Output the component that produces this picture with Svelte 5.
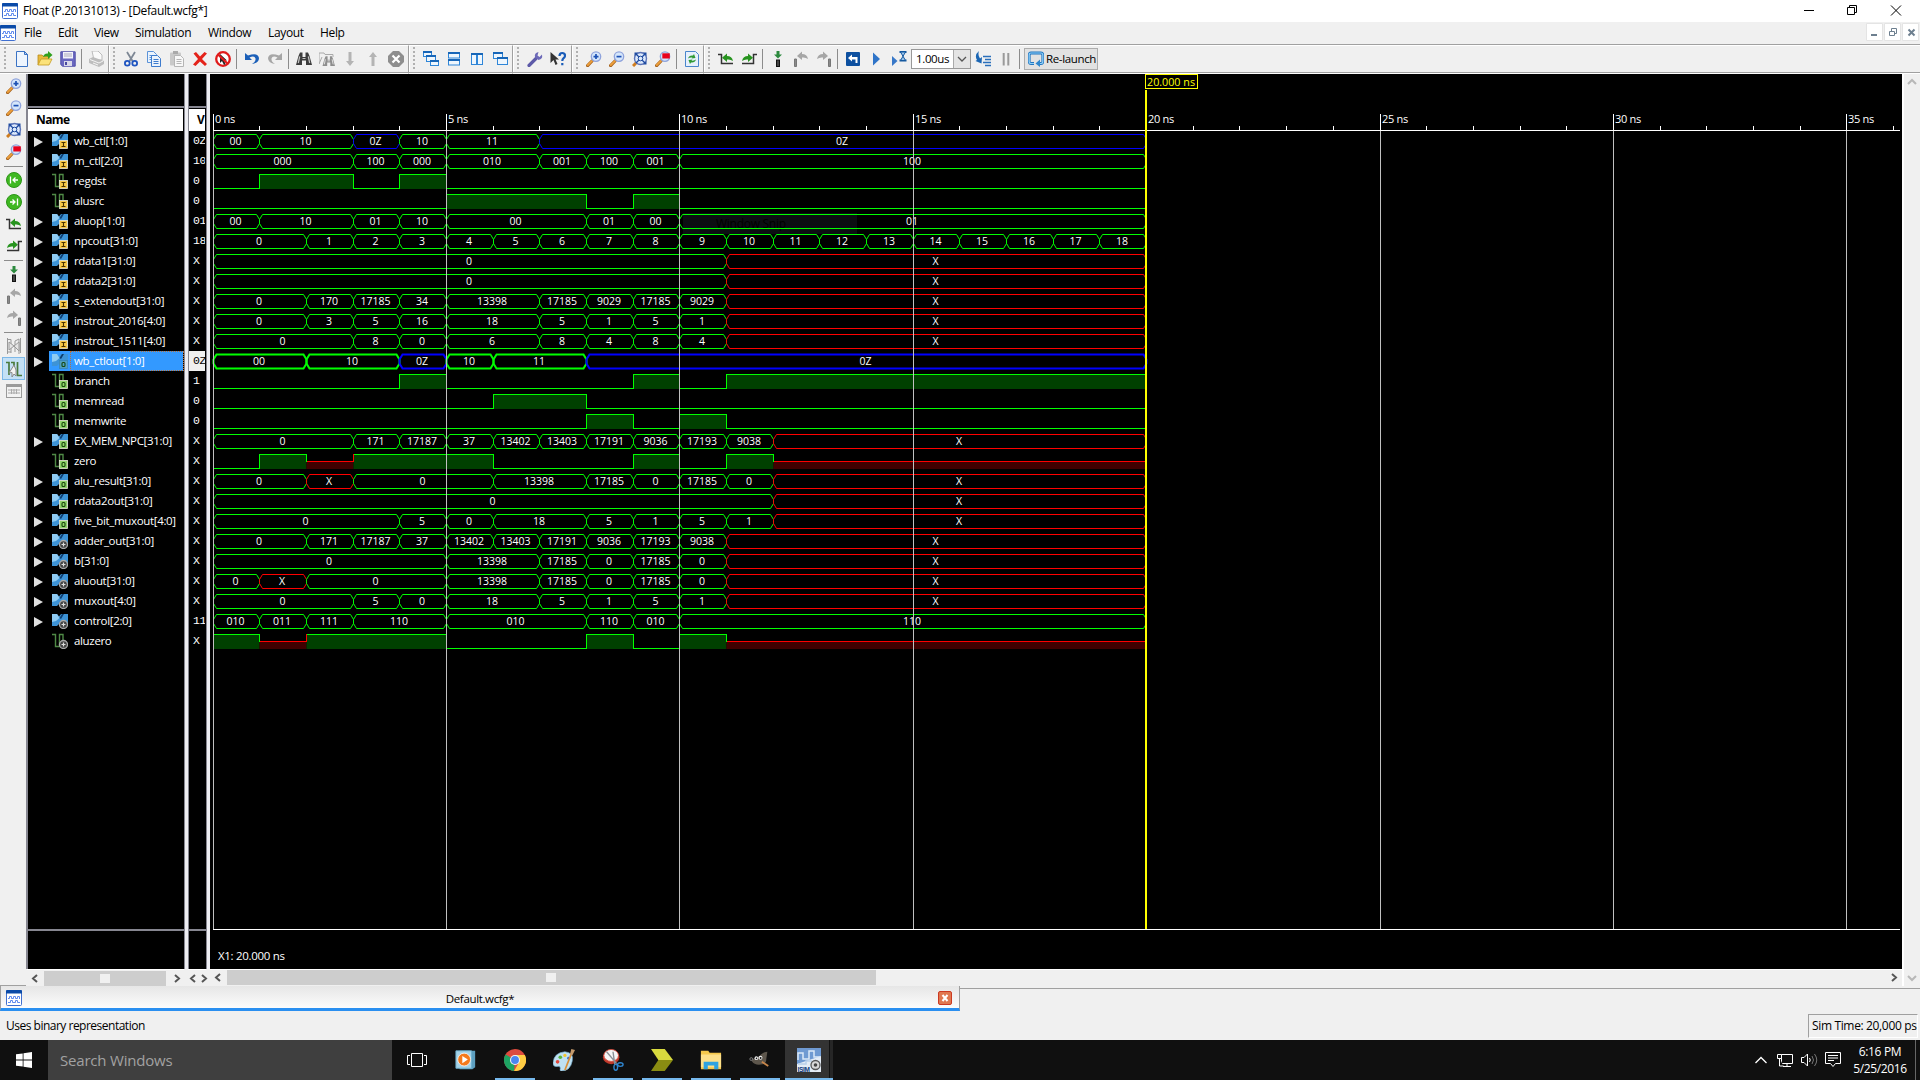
<script>
  // Time axis: origin and scale of the waveform viewport
  const X0 = 213;
  const NS = 46.68;
  const END = 20;
  const at = (t) => Math.floor(X0 + t * NS) + 0.5;

  const signals = [
    ['wb_ctl[1:0]', 'I', '0Z', '0:00 1:10 3:0Z 4:10 5:11 7:0Z'],
    ['m_ctl[2:0]', 'I', '10', '0:000 3:100 4:000 5:010 7:001 8:100 9:001 10:100'],
    ['regdst', 'I', '0', '0:0 1:1 3:0 4:1 5:0'],
    ['alusrc', 'I', '0', '0:0 5:1 8:0 9:1 10:0'],
    ['aluop[1:0]', 'I', '01', '0:00 1:10 3:01 4:10 5:00 8:01 9:00 10:01'],
    ['npcout[31:0]', 'I', '18', '0:0 2:1 3:2 4:3 5:4 6:5 7:6 8:7 9:8 10:9 11:10 12:11 13:12 14:13 15:14 16:15 17:16 18:17 19:18'],
    ['rdata1[31:0]', 'I', 'X', '0:0 11:X'],
    ['rdata2[31:0]', 'I', 'X', '0:0 11:X'],
    ['s_extendout[31:0]', 'I', 'X', '0:0 2:170 3:17185 4:34 5:13398 7:17185 8:9029 9:17185 10:9029 11:X'],
    ['instrout_2016[4:0]', 'I', 'X', '0:0 2:3 3:5 4:16 5:18 7:5 8:1 9:5 10:1 11:X'],
    ['instrout_1511[4:0]', 'I', 'X', '0:0 3:8 4:0 5:6 7:8 8:4 9:8 10:4 11:X'],
    ['wb_ctlout[1:0]', 'O', '0Z', '0:00 2:10 4:0Z 5:10 6:11 8:0Z'],
    ['branch', 'O', '1', '0:0 4:1 5:0 9:1 10:0 11:1'],
    ['memread', 'O', '0', '0:0 6:1 8:0'],
    ['memwrite', 'O', '0', '0:0 8:1 9:0 10:1 11:0'],
    ['EX_MEM_NPC[31:0]', 'O', 'X', '0:0 3:171 4:17187 5:37 6:13402 7:13403 8:17191 9:9036 10:17193 11:9038 12:X'],
    ['zero', 'O', 'X', '0:0 1:1 2:X 3:1 6:0 9:1 10:0 11:1 12:X'],
    ['alu_result[31:0]', 'O', 'X', '0:0 2:X 3:0 6:13398 8:17185 9:0 10:17185 11:0 12:X'],
    ['rdata2out[31:0]', 'O', 'X', '0:0 12:X'],
    ['five_bit_muxout[4:0]', 'O', 'X', '0:0 4:5 5:0 6:18 8:5 9:1 10:5 11:1 12:X'],
    ['adder_out[31:0]', 'W', 'X', '0:0 2:171 3:17187 4:37 5:13402 6:13403 7:17191 8:9036 9:17193 10:9038 11:X'],
    ['b[31:0]', 'W', 'X', '0:0 5:13398 7:17185 8:0 9:17185 10:0 11:X'],
    ['aluout[31:0]', 'W', 'X', '0:0 1:X 2:0 5:13398 7:17185 8:0 9:17185 10:0 11:X'],
    ['muxout[4:0]', 'W', 'X', '0:0 3:5 4:0 5:18 7:5 8:1 9:5 10:1 11:X'],
    ['control[2:0]', 'W', '11', '0:010 1:011 2:111 3:110 5:010 8:110 9:010 10:110'],
    ['aluzero', 'W', 'X', '0:1 1:X 2:1 5:0 8:1 9:0 10:1 11:X']
  ].map(([name, kind, value, wave], row) => {
    const steps = wave.split(' ').map((s) => s.split(':'));
    const segs = steps.map(([t, v], i) => ({ t: +t, e: i + 1 < steps.length ? +steps[i + 1][0] : END, v }));
    return { name, kind, value, segs, bus: name.includes('['), y: 134.5 + row * 20, selected: name === 'wb_ctlout[1:0]' };
  });

  const busColor = (v) => (v === 'X' ? '#f00' : v.includes('Z') ? '#00f' : '#0f0');
  const bitColor = (v) => (v === 'X' ? '#f00' : '#0f0');
  const level = (v) => (v === '1' ? 0 : v === 'X' ? 7 : 14);

  const hexagon = (s, y) => {
    const a = at(s.t), b = at(s.e);
    return `M${a} ${y + 7}V${y + 5}L${a + 3} ${y}H${b - 3}L${b} ${y + 5}V${y + 9}L${b - 3} ${y + 14}H${a + 3}L${a} ${y + 9}Z`;
  };

  const ticks = Array.from({ length: 37 }, (_, i) => i);
  const majors = ticks.filter((t) => t % 5 === 0);

  const lens = '<path d="M1.6 14.6 6 10" stroke="#a8641e" stroke-width="3.2" stroke-linecap="round"/><path d="M1.8 14 6 9.8" stroke="#eda03c" stroke-width="1.8" stroke-linecap="round"/><circle cx="10" cy="5.6" r="4.7" fill="#d5e6fb" stroke="#8fa3dc" stroke-width="1.3"/>';
  const app = '<rect x=".5" y=".5" width="15" height="15" rx="1" fill="#fff" stroke="#3f6fd0"/><path d="M0 1q0-1 1-1h14q1 0 1 1v2.5H0z" fill="#0a4aa8"/><path d="M2 8.500h1.500v-2h2v2h2v-2h2v2h2v-2h2V9M2 12.500h2.500v-2h2v2h3v-2h2v2H14" fill="none" stroke="#5f8aee"/>';
  const stepL = (c, k) => `<path d="M0 3.500h3.500V12.500H15" fill="none" stroke="${k}" stroke-width="1.5"/><path d="M4 6.800 9 2.500V5q5 0 6 5-2.500-2-6-1.500V11z" fill="${c}"/>`;
  const stepR = (c, k) => `<path d="M16 3.500h-3.500V12.500H1" fill="none" stroke="${k}" stroke-width="1.5"/><path d="M12 6.800 7 2.500V5Q2 5 1 10q2.500-2 6-1.500V11z" fill="${c}"/>`;
  const doc = (x, y, f, s) => `<path d="M${x} ${y}h6l3 3v8h-9z" fill="${f}" stroke="${s}"/><path d="M${x + 2} ${y + 4}h5m-5 2h5m-5 2h5" stroke="${s}" fill="none"/>`;
  const win = (x, y, w, h) => `<rect x="${x}" y="${y}" width="${w}" height="${h}" fill="#eef6fd" stroke="#2f86d8"/><path d="M${x - 0.5} ${y + 0.5}h${w + 1}" stroke="#1766b8" stroke-width="2"/>`;
  const binos = (c, d) => `<path d="M0 14 2.500 5 4 1.500h2.500V6h3V1.500H12L13.500 5 16 14h-6V9.500H6V14z" fill="${c}"/><path d="M3.700 5.500 2.300 12M12.300 5.500l1.400 6.500M6.500 7.500h3" stroke="${d}" stroke-width="1.200"/>`;

  const icons = {
    app,
    new: '<path d="M2.500.5h8l3 3v12h-11z" fill="#eef5fe" stroke="#3a72c4"/><path d="M10.500.5v3h3z" fill="#bcd4f4" stroke="#3a72c4"/>',
    open: '<path d="M1 14V4h4l1.500 1.500H12V8" fill="#e8b93c" stroke="#b98a1a" stroke-width=".8"/><path d="M1 14 4 8h11l-3 6z" fill="#fbe27a" stroke="#c49a22" stroke-width=".8"/><path d="M6 6Q7 2 11 2.500V0l4.500 4-4.500 4V5.500Q8 5 6 6z" fill="#2fa01c"/>',
    save: '<path d="M.8.8h14.400v14.400H2.500L.8 13.500z" fill="#6a68c0" stroke="#504fa8"/><rect x="3" y="1" width="10" height="6.500" fill="#f2f2fb"/><path d="M4 3h8M4 5h8" stroke="#aab"/><rect x="4" y="10" width="8" height="5" fill="#d9d9ea"/><rect x="5" y="11" width="2" height="3" fill="#4a4aa0"/>',
    print: '<path d="M3 0h6l4 4v5H5z" fill="#fafafa" stroke="#bbb"/><path d="m0 8 4-2 11 4v3l-5 3L0 12z" fill="#bdbdbd"/><path d="m1 8.500 9 3.500 4-2M4 12l5 2" stroke="#f4f4f4" fill="none"/>',
    cut: '<path d="M4 1 9.500 10M12 1 6.500 10" stroke="#7d8794" stroke-width="1.800"/><circle cx="4.300" cy="12.300" r="2.400" fill="none" stroke="#1f55c0" stroke-width="1.800"/><circle cx="11.700" cy="12.300" r="2.400" fill="none" stroke="#1f55c0" stroke-width="1.800"/>',
    copy: doc(1.5, 0.5, '#eaf3fd', '#5b93d8') + doc(5.5, 4.5, '#eaf3fd', '#3d7bcd'),
    paste: '<rect x="1" y="1.500" width="11" height="13" rx="1" fill="#c9c9c9"/><path d="M4 0h5v3H4z" fill="#aaa"/>' + doc(5.5, 4.5, '#f8f8f8', '#b5b5b5'),
    del: '<path d="M1.500 2.500 4 1l4 4.500L12.500 1 15 2.500 10 8l5 5-2 2-5-4.500L3.500 15 1 13.500 6 8z" fill="#e4231a"/>',
    stop: '<circle cx="8" cy="8" r="6.800" fill="#fff" stroke="#e01b1b" stroke-width="2.300"/><path d="M5 3v9l2-2 2 4 1.500-1L9 9.500h3z" fill="#222"/><path d="m3 3.500 10 9.500" stroke="#e01b1b" stroke-width="2.200"/>',
    undo: '<path d="M1 2v7h7L5.500 6.500q5-2.500 6 1 .5 3-3.500 5.500 7-1 7-6Q14 1 4 4.500z" fill="#1b5fb8"/>',
    redo: '<path d="M15 2v7H8l2.500-2.500q-5-2.500-6 1Q4 10.500 8 13 1 12 1 7q1-6 11-2.500z" fill="#a6a6a6"/>',
    find: binos('#3c3c3c', '#c4c4c4'),
    findf: '<path d="M0 13V2h5l1 1.500h8V6M0 13l3-7" fill="none" stroke="#aaa"/><g transform="translate(3.500 4) scale(.78)">' + binos('#8e8e8e', '#e4e4e4') + '</g>',
    down: '<path d="M6.500 1h3v9H12l-4 5-4-5h2.500z" fill="#b4b4b4"/>',
    up: '<path d="M6.500 15h3V6H12L8 1 4 6h2.500z" fill="#b4b4b4"/>',
    cancel: '<path d="M5 0h6l5 5v6l-5 5H5l-5-5V5z" fill="#8e8e8e"/><path d="m4.500 4.500 7 7m0-7-7 7" stroke="#fff" stroke-width="2.200"/>',
    cascade: win(0.5, 0.5, 8, 5) + win(3.5, 4.5, 9, 6) + win(7.5, 9.5, 8, 5),
    tileh: win(2.5, 1.5, 11, 5.5) + win(2.5, 8.5, 11, 5.5),
    tilev: win(2.5, 2.5, 5, 11) + win(8.5, 2.5, 5, 11),
    windows: win(1.5, 1.5, 9, 6) + win(5.5, 6.5, 10, 7),
    wrench: '<path d="M2 14.500 9 7.500" stroke="#5d5aa8" stroke-width="3.200" stroke-linecap="round"/><path d="M8 6Q7 2 11.500 1L10.500 4.500 12.500 6 15 3.500Q16 8 11.500 9z" fill="#6c69b8"/>',
    whats: '<path d="M.5 1v11l3-3 2 5 2-1-2-4.500h3.500z" fill="#333"/><path d="M9.500 5Q9.500 2 12.300 2q2.700 0 2.700 2.700 0 1.600-1.600 2.600-1.100.8-1.100 2.700M12.300 12v2.300" stroke="#1a5cb8" stroke-width="2.200"/>',
    zin: lens + '<path d="M7.500 5.600h5M10 3.100v5" stroke="#1c50b4" stroke-width="1.700"/>',
    zout: lens + '<path d="M7.500 5.600h5" stroke="#1c50b4" stroke-width="1.700"/>',
    zfit: '<path d="M1 15 4.500 11.500" stroke="#cf7d20" stroke-width="3"/><circle cx="8.500" cy="7.500" r="6" fill="#dce9fb" stroke="#5b74b8" stroke-width="1.400"/><path d="m4 3 9 9m0-9-9 9" stroke="#1d4aa0" stroke-width="1.300"/><path d="M2.500 1.500H6L2.500 5zM14.500 1.500V5L11 1.500zM14.500 13.500H11l3.500-3.500z" fill="#1d4aa0"/><circle cx="8.500" cy="7.500" r="2.300" fill="#dce9fb" stroke="#1d4aa0"/>',
    zred: lens + '<rect x="7.300" y="2.300" width="7.500" height="5.200" fill="#e8001c"/>',
    refresh: '<path d="M1.500.5h10l3 3v12h-13z" fill="#e6f0fc" stroke="#4a86cc"/><path d="M4 7.500Q5 4 9 4.500L10 3l1.500 4-4 .5 1-1Q6 6 4 7.500zM12 8.500q-1 3.500-5 3l-1 1.500-1.500-4 4-.5-1 1q2.500.5 4.500-1z" fill="#2f9a34"/>',
    prev: stepL('#27941f', '#333'),
    next: stepR('#27941f', '#333'),
    marker: '<path d="M6.500 0h3v3.500H12L8 7.500 4 3.500h2.500z" fill="#2c8a3e"/><rect x="6.500" y="9" width="3" height="6.500" fill="#444" stroke="#111"/>',
    mprev: '<path d="M1.500 8h2v7.500h-2z" fill="#8a8a8a" stroke="#777"/><path d="M4 5 9 .5V3q5 0 6 5-2.500-2-6-1.500V9z" fill="#a6a6a6"/>',
    mnext: '<path d="M12.500 8h2v7.500h-2z" fill="#8a8a8a" stroke="#777"/><path d="M12 5 7 .5V3Q2 3 1 8q2.500-2 6-1.500V9z" fill="#a6a6a6"/>',
    restart: '<rect x="1" y="1" width="14" height="14" rx="1" fill="#0d50a0"/><path d="m3 7 4-3.500V6h5.500v6h-2V8.500H7v2z" fill="#fff"/>',
    play: '<path d="M5 1.500 12 8l-7 6.500z" fill="#2f74c8"/>',
    playt: '<path d="M1 5v10l5.500-5z" fill="#3878c8"/><path d="M8.500 1h7M8.500 9.500h7" stroke="#15599f" stroke-width="1.800"/><path d="m9.500 1 5 8.500h-5l5-8.500z" fill="#9cc4ea" stroke="#15599f"/>',
    step: '<path d="M4 0Q-1 4 2 9l-1.500 1L6.500 12.500 7 6 5 7.500Q2.500 4 4 0z" fill="#1b66b4"/><path d="M8 5.500h8M10 8.500h6M8 11.500h8M10 14.500h6" stroke="#2b6fbb" stroke-width="1.400"/>',
    pause: '<path d="M5.700 2v12.500M10.300 2v12.500" stroke="#9a9a9a" stroke-width="2"/>',
    relaunch: '<path d="M6 12.500H3Q1.200 12.500 1.200 10.500V4Q1.200 2 3 2h10q1.800 0 1.800 2v6.500q0 2-1.800 2h-1" fill="none" stroke="#1f74c0" stroke-width="2.800"/><path d="M6 12.500H3Q1.200 12.500 1.200 10.500V4Q1.200 2 3 2h10q1.800 0 1.800 2v6.500q0 2-1.800 2h-1" fill="none" stroke="#8fd0f8" stroke-width="1.200"/><path d="M7.500 12.500 12 8.500v7.500z" fill="#2f86cc"/>',
    gprev: '<circle cx="8" cy="8" r="7.500" fill="#3fb822" stroke="#2c9418"/><path d="M4.500 4.500v7M12 8H7m2.500-2.500L7 8l2.500 2.500" fill="none" stroke="#fff" stroke-width="1.300"/>',
    gnext: '<circle cx="8" cy="8" r="7.500" fill="#3fb822" stroke="#2c9418"/><path d="M11.500 4.500v7M4 8h5M6.500 5.500 9 8l-2.500 2.500" fill="none" stroke="#fff" stroke-width="1.300"/>',
    snapoff: '<path d="M1.500 0v16M1 1.500h4V15M9 14V3l4-2v15M14.500 0v15M1 14h4" fill="none" stroke="#999"/><path d="M3 4 8 8 3 12zM13 4 8 8l5 5z" fill="#e4e4e4" stroke="#999"/>',
    snap: '<path d="M0 1.500h3V14M5 1.500h3V7M11.500 1v13.500H16" fill="none" stroke="#4a7a3c" stroke-width="1.700"/><path d="M8 4 3 12l3-.5V16l2-3 2 2V9z" fill="#f4f4f4" stroke="#888"/>',
    table: '<path d="M0 1h16v3H0z" fill="#9a9a9a"/><rect x=".5" y="3.500" width="15" height="11" fill="#f2f2f2" stroke="#999"/><path d="M2 7h12M2 10h12M5.500 6v5M8 6v5M10.500 6v5" stroke="#aaa"/>'
  };

  const groups = [
    [109, ['new', 'open', 'save', '|', 'print']],
    [300, ['cut', 'copy', 'paste', 'del', 'stop', '|', 'undo', 'redo', '|', 'find', 'findf', 'down', 'up', 'cancel']],
    [104, ['cascade', 'tileh', 'tilev', 'windows']],
    [59, ['wrench', 'whats']],
    [132, ['zin', 'zout', 'zfit', 'zred', '|', 'refresh']],
    [1216, ['prev', 'next', '|', 'marker', 'mprev', 'mnext', '|', 'restart', 'play', 'playt', 'combo', 'step', 'pause', '|', 'relaunch']]
  ];
  const side = ['zin', 'zout', 'zfit', 'zred', '|', 'gprev', 'gnext', 'prev', 'next', '|', 'marker', 'mprev', 'mnext', '|', 'snapoff', 'snap', 'table'];
  const menus = [['File', 34], ['Edit', 36], ['View', 41], ['Simulation', 73], ['Window', 60], ['Layout', 52], ['Help', 40]];

  const badgeFill = { I: '#f7c948', O: '#8fd46a' };

  const apps = [
    ['wmp', ''],
    ['chrome', 'open'],
    ['paint', ''],
    ['snip', 'open'],
    ['ise', 'open'],
    ['files', 'open'],
    ['gimp', 'open'],
    ['isim', 'open active']
  ];
  const appIcons = {
    wmp: '<path d="M5 2h17v18l-3 2H5z" fill="#5d9fc0"/><path d="M1 2h17v19H1z" fill="#a5d3e8" stroke="#6db0cf"/><circle cx="10" cy="11.500" r="7" fill="#f47a1c" stroke="#fff" stroke-width=".8"/><path d="m8 7.500 6 4-6 4z" fill="#fff"/>',
    chrome: '<circle cx="12" cy="12" r="12" fill="#dd4b3e"/><path d="M12 12 1.600 6A12 12 0 0 0 11 24z" fill="#1da362"/><path d="M12 12 12 6.500H22.700A12 12 0 0 1 11 24l5.500-9.500z" fill="#ffcd43"/><circle cx="12" cy="12" r="5.500" fill="#f4f4f4"/><circle cx="12" cy="12" r="4.300" fill="#4a86f0"/>',
    paint: '<path d="M0 15Q1 4 13 3q10 1 8 10-2 11-12 11-2 0-1-3 0-3-3-2-5 1-5-4z" fill="#bfe0f2" stroke="#7ab4d4" stroke-width=".7"/><circle cx="5" cy="14" r="2" fill="#e2483c"/><circle cx="8" cy="9" r="2" fill="#58b43c"/><circle cx="13" cy="7" r="1.800" fill="#f4c430"/><circle cx="17" cy="10" r="1.600" fill="#3a6cc8"/><path d="M13 23 20 5" stroke="#d98f38" stroke-width="1.800"/><path d="M18.500 6 20 0l4 1-3 6z" fill="#c49a6c"/>',
    snip: '<ellipse cx="10" cy="9" rx="9" ry="7.500" fill="#c0392b"/><ellipse cx="10" cy="7" rx="8" ry="6.500" fill="#f6f6f6" stroke="#d04a3c"/><path d="m5 3 11 13M12 3l2 14" stroke="#8a8f96" stroke-width="1.500"/><ellipse cx="15" cy="20" rx="2" ry="3.200" fill="none" stroke="#2f86d0" stroke-width="1.500"/><ellipse cx="20" cy="17" rx="3" ry="2" fill="none" stroke="#2f86d0" stroke-width="1.500"/>',
    ise: '<path d="M0 0h15l9 12H8z" fill="#d8da3e"/><path d="M8 12h16l-9 12H0z" fill="#8a8c12"/>',
    files: '<path d="M1 2h8l1.500 2H23v18H1z" fill="#f5c84c"/><path d="M1 6h22v14H1z" fill="#fde08a"/><path d="M4 22v-8h16v8h-4.500v-4h-7v4z" fill="#2ea3e0"/>',
    gimp: '<path d="M2 9q4 4 9-1 4-5 9-5l-1 7q0 7-6 7-7 1-10-4z" fill="#5d564c"/><circle cx="8" cy="10" r="2" fill="#eee"/><circle cx="12.500" cy="9.500" r="2.200" fill="#eee"/><circle cx="8.200" cy="10.200" r=".9" fill="#111"/><circle cx="12.700" cy="9.800" r="1" fill="#111"/><circle cx="2.500" cy="11" r="1.600" fill="#222" stroke="#777"/><path d="m14 14 7 4.500" stroke="#c8864a" stroke-width="2"/>',
    isim: '<rect width="24" height="24" fill="#e4ecf6"/><path d="M0 0h24v8L0 16z" fill="#6f9ad2"/><path d="M1 12V5h5v6h6V3h5v6h6" fill="none" stroke="#dce9f8" stroke-width="1.500"/><path d="M1 16h8v-3h6" fill="none" stroke="#b8cfea" stroke-width="1.500"/><circle cx="18.500" cy="17" r="4.500" fill="#d8d8d8" stroke="#555" stroke-width="1.300"/><circle cx="18.500" cy="17" r="1.800" fill="#444"/><text x=".5" y="23.500" font-family="Liberation Sans, sans-serif" font-weight="700" font-size="6.500" fill="#123a78">ISIM</text>'
  };
</script>

{#snippet icon(name)}
  <svg class="icon" viewBox="0 0 16 16" fill="none">{@html icons[name]}</svg>
{/snippet}

<div class="desktop">
  <header class="title">
    {@render icon('app')}
    <span class="caption">Float (P.20131013) - [Default.wcfg*]</span>
    <svg class="winbtns" width="140" height="22" viewBox="1780 0 140 22" fill="none" stroke="#000">
      <path d="M1804 10.500h10M1847.500 7.500h7v7h-7zM1849.500 7.500v-2h7v7h-2M1891 5.500l10 10m0-10-10 10" />
    </svg>
  </header>

  <nav class="menubar">
    {@render icon('app')}
    {#each menus as [label, width]}
      <span class="menu" style="width:{width}px">{label}</span>
    {/each}
    <svg class="mdi" width="54" height="22" viewBox="1866 22 54 22" fill="none">
      <path d="M1866.500 23.500h16v17h-16zM1884.500 23.500h16v17h-16zM1902.500 23.500h16v17h-16z" fill="#fff" stroke="#e4e4e4" />
      <path d="M1871 35h6" stroke="#6d7f8f" stroke-width="2" />
      <path d="M1889.500 31.500h5v4h-5zM1891.500 31v-2.500h5v5h-2" stroke="#6d7f8f" />
      <path d="m1908.500 29.500 6 6m0-6-6 6" stroke="#6d7f8f" stroke-width="2" />
    </svg>
  </nav>

  <div class="toolbar">
    {#each groups as [width, items]}
      <div class="group" style="width:{width}px">
        <i class="grip"></i>
        {#each items as item}
          {#if item === '|'}
            <i class="sep"></i>
          {:else if item === 'combo'}
            <div class="combo"><span>1.00us</span><svg width="16" height="18" viewBox="0 0 16 18"><path d="m4 7 4 4 4-4" fill="none" stroke="#555" stroke-width="1.300" /></svg></div>
          {:else if item === 'relaunch'}
            <div class="relaunch">{@render icon('relaunch')}<span>Re-launch</span></div>
          {:else}
            <span class="tool">{@render icon(item)}</span>
          {/if}
        {/each}
      </div>
    {/each}
  </div>

  <main class="work">
    <aside class="side">
      {#each side as item}
        {#if item === '|'}
          <i class="hsep"></i>
        {:else}
          <span class="stool" class:on={item === 'snap'}>{@render icon(item)}</span>
        {/if}
      {/each}
    </aside>

    <section class="names">
      <div class="blank"></div>
      <div class="head">Name</div>
      <div class="list">
        {#each signals as s}
          <div class="row">
            <span class="arrow">
              {#if s.bus}<svg width="9" height="10" viewBox="0 0 9 10"><path d="M0 0 9 5 0 10z" fill="#e0e0e0" /></svg>{/if}
            </span>
            <div class="label" class:selected={s.selected}>
              <svg class="sig" width="16" height="16" viewBox="0 0 16 16" fill="none">
                {#if s.bus}
                  <path d="M0 1h5l2 2.500L9 1h7v12H9l-2-2-2 2H0z" fill="#3d93d6" />
                  <path d="M0 1h5l2.500 4L4 8 0 9z" fill="#8ecbf2" />
                  <path d="M7.500 5 10 1h2L9 6z" fill="#0d3d70" />
                {:else}
                  <path d="M0 1.500h3.500V13.500H7.500V1.500H11V7" stroke="#4f8a46" stroke-width="1.400" />
                {/if}
                {#if s.kind === 'W'}
                  <circle cx="11.500" cy="11.500" r="4" fill="#444" stroke="#a8a8a8" stroke-width="1.300" />
                  <path d="M9.500 11.500h4M11.500 9.500v4" stroke="#ddd" stroke-width="1.200" />
                {:else}
                  <rect x="7.500" y="7.500" width="8" height="8" fill={s.selected ? '#4f9fc0' : badgeFill[s.kind]} stroke={s.selected ? '#3b86b4' : '#e8e8d8'} stroke-width=".8" />
                  {#if s.kind === 'I'}
                    <path d="M9.500 9.500h4M11.500 9.500v4M9.500 13.500h4" stroke="#4a3400" stroke-width="1.100" />
                  {:else}
                    <rect x="10" y="9.500" width="3" height="4" rx="1" stroke="#17470c" stroke-width="1.100" />
                  {/if}
                {/if}
              </svg>
              <span class="name">{s.name}</span>
            </div>
          </div>
        {/each}
      </div>
      <div class="foot"></div>
    </section>
    <i class="splitter"></i>

    <section class="values">
      <div class="blank"></div>
      <div class="head">V</div>
      <div class="list">
        {#each signals as s}
          <div class="value" class:selected={s.selected}>{s.value}</div>
        {/each}
      </div>
      <div class="foot"></div>
    </section>
    <i class="splitter"></i>

    <svg class="waves" width="1692" height="895" viewBox="210 74 1692 895" fill="none">
      <rect x="683" y="213" width="174" height="21" fill="#0c0e12" />
      <text x="716" y="228" font-size="12" fill="#000" textLength="70">Window Snip</text>

      {#each signals as s}
        {#if s.bus}
          {#each s.segs as g}
            <path d={hexagon(g, s.y)} stroke={busColor(g.v)} stroke-width={s.selected ? 2 : 1} />
          {/each}
        {:else}
          {#each s.segs as g, i}
            {@const y = s.y + level(g.v)}
            {#if g.v !== '0'}
              <rect x={at(g.t)} {y} width={at(g.e) - at(g.t)} height={s.y + 14.5 - y} fill={g.v === 'X' ? '#400000' : '#004000'} />
            {/if}
            <path d="M{at(g.t)} {y}H{at(g.e)}" stroke={bitColor(g.v)} />
            {#if i > 0}
              <path d="M{at(g.t)} {s.y + level(s.segs[i - 1].v)}V{y}" stroke={bitColor(s.segs[i - 1].v)} stroke-linecap="square" />
            {/if}
          {/each}
        {/if}
      {/each}

      {#each signals.filter((s) => s.bus) as s}
        {#each s.segs as g}
          <text class="val" x={(at(g.t) + at(g.e)) / 2 - 1} y={s.y + 10.5}>{g.v}</text>
        {/each}
      {/each}

      {#each majors as t}
        <path d="M{at(t)} 131V929" stroke="#c0c0c0" />
        <path d="M{at(t)} 114V131" stroke="#fff" />
        <text class="ns" x={at(t) + 1.5} y="122.500">{t} ns</text>
      {/each}
      {#each ticks as t}
        <path d="M{at(t)} 126V130" stroke="#fff" />
      {/each}
      <path d="M213 130.500H1900M213 929.500H1900" stroke="#fff" />
      <path d="M1146 90V929" stroke="#ff0" stroke-width="2" />
      <rect x="1145.500" y="74.500" width="52" height="14" stroke="#ff0" fill="#000" />
      <text x="1147" y="85.500" fill="#ff0" font-size="11" textLength="48" lengthAdjust="spacingAndGlyphs">20.000 ns</text>
      <text x="218" y="959.500" fill="#fff" font-size="11.500" textLength="67">X1: 20.000 ns</text>
    </svg>

    <div class="vscroll">
      <svg width="16" height="912" viewBox="1904 74 16 912" fill="none" stroke="#b8b8b8" stroke-width="2"><path d="m1908 84 4-4 4 4M1908 976l4 4 4-4" /></svg>
    </div>

    <svg class="hscroll" width="1876" height="17" viewBox="26 969 1876 17" fill="none">
      <path d="M27 969.500H184M188 969.500H206M210 969.500H1902" stroke="#fff" />
      <path d="M44 971H166V986H44zM227 970H876V985H227z" fill="#cdcdcd" />
      <path d="M100 974h10v9h-10zM546 973h10v9h-10z" fill="#f0f0f0" />
      <path d="m37 975-4 3.500 4 3.500M175 975l4 3.500-4 3.500M195 975l-4 3.500 4 3.500M202 975l4 3.500-4 3.500M220 974l-4 3.500 4 3.500M1892 974l4 3.500-4 3.500" stroke="#555" stroke-width="2" />
    </svg>
  </main>

  <div class="tabs">
    <div class="tab">
      {@render icon('app')}
      <span>Default.wcfg*</span>
      <svg class="close" width="14" height="14" viewBox="0 0 14 14"><rect x=".5" y=".5" width="13" height="13" rx="1.500" fill="#e07850" stroke="#cc3a22" /><path d="m4.500 4 5 6m0-6-5 6" stroke="#fff" stroke-width="2" /></svg>
    </div>
    <div class="tabrest"></div>
  </div>

  <footer class="status">
    <span class="hint">Uses binary representation</span>
    <span class="sim">Sim Time: 20,000 ps</span>
  </footer>

  <div class="taskbar">
    <div class="start"><svg width="16" height="16" viewBox="0 0 16 16"><path d="M0 2.300 6.700 1.400V7.600H0zM7.500 1.300 16 0v7.600H7.500zM0 8.400h6.700v6.200L0 13.700zM7.500 8.400H16V16l-8.500-1.300z" fill="#fff" /></svg></div>
    <div class="search">Search Windows</div>
    <div class="taskview"><svg width="20" height="14" viewBox="0 0 20 14" fill="none" stroke="#fff"><path d="M4.500.5h11v13h-11zM3 2.500H.5v9H3M17 2.500h2.500v9H17" /></svg></div>
    {#each apps as [name, state]}
      <div class="app {state}"><svg width="22" height="22" viewBox="0 0 24 24" fill="none">{@html appIcons[name]}</svg></div>
    {/each}
    <svg class="tray" width="100" height="40" viewBox="1750 1040 100 40" fill="none" stroke="#fff">
      <path d="m1755.500 1063 5.500-5.500 5.500 5.500" stroke-width="1.300" />
      <path d="M1781.500 1054.500h11v9h-11zM1787 1064v2M1783 1066.500h8" />
      <path d="M1777.500 1054.500h4v4h-4zM1779.500 1058v8h4" fill="#101010" />
      <path d="M1801.500 1057.500h2.500l3.500-3.500v12l-3.500-3.500h-2.500z" />
      <path d="M1809.500 1058q1.500 2 0 4" /><path d="M1812 1056q3 4 0 8M1814.500 1054q4.500 6 0 12" stroke="#777" />
      <path d="M1825.500 1052.500h15v11h-5l-2.500 3-2.500-3h-5zM1828 1055.500h10M1828 1058h10M1828 1060.500h6" />
    </svg>
    <div class="clock"><span>6:16 PM</span><span>5/25/2016</span></div>
    <i class="peek"></i>
  </div>
</div>

<style>
  :global(body) { margin: 0; background: #f0f0f0; }
  .desktop {
    width: 1920px; height: 1080px; overflow: hidden;
    display: flex; flex-direction: column;
    background: #f0f0f0; color: #000;
    font: 12px/1 "Open Sans", "Noto Sans", sans-serif;
    letter-spacing: -0.35px;
  }
  .icon { width: 16px; height: 16px; display: block; flex: none; }
  svg { display: block; }

  .title { height: 22px; display: flex; align-items: center; background: #fff; padding-left: 2px; box-sizing: border-box; }
  .caption { margin-left: 5px; flex: 1; }
  .menubar { height: 22px; display: flex; align-items: center; }
  .menubar > .icon { margin-right: 8px; }
  .menu { flex: none; }
  .mdi { margin-left: auto; }

  .toolbar { height: 30px; display: flex; box-sizing: border-box; border-top: 1px solid #a0a0a0; }
  .group { display: flex; align-items: center; box-sizing: border-box; height: 29px; padding-bottom: 2px; border-right: 1px solid #a0a0a0; border-top: 1px solid #fff; border-bottom: 1px solid #fff; box-shadow: 0 -1px 0 #a0a0a0 inset, 1px 0 0 #fff; flex: none; }
  .group:last-child { border-right: 0; }
  .grip { width: 2px; height: 23px; margin: 0 4px 0 4px; background: repeating-linear-gradient(#b0b0b0 0 2px, transparent 2px 4px); }
  .tool { width: 23px; display: flex; justify-content: center; }
  .sep { width: 1px; height: 20px; margin: 0 3px 0 2px; background: #8c8c8c; }
  .combo { width: 60px; height: 20px; margin-left: 1px; display: flex; align-items: center; background: #fff; border: 1px solid #999; box-sizing: border-box; }
  .combo span { flex: 1; padding-left: 4px; font-size: 11.5px; }
  .combo svg { background: #e4e4e4; border-left: 1px solid #aaa; }
  .relaunch { display: flex; align-items: center; width: 74px; height: 22px; margin-left: 1px; padding-left: 3px; box-sizing: border-box; background: #e2e2e2; border: 1px solid #adadad; gap: 2px; font-size: 11.5px; white-space: nowrap; }

  .work { height: 912px; display: grid; grid-template-columns: 26px 159px 3px 19px 3px 1692px 18px; grid-template-rows: 895px 17px; }
  .side { grid-row: 1 / 3; display: flex; flex-direction: column; align-items: center; padding: 1px 0 0 1px; border-bottom: 1px solid #a0a0a0; box-sizing: border-box; }
  .stool { width: 22px; height: 22px; display: flex; align-items: center; justify-content: center; box-sizing: border-box; }
  .stool.on { width: 23px; height: 23px; background: #c4e0f6; border: 1px solid #7db8e8; }
  .hsep { width: 19px; height: 1px; margin: 3px 0 2px; background: #8c8c8c; }

  .names, .values { background: #000; border-right: 1px solid #868690; overflow: hidden; height: 895px; box-sizing: border-box; }
  .names { border-left: 2px solid #868690; }
  .values { border-left: 1px solid #868690; }
  .blank { height: 32px; border-bottom: 2px solid #868690; }
  .head { height: 22px; margin: 1px 1px 0 0; background: #fff; font-weight: 700; line-height: 22px; padding-left: 8px; letter-spacing: -0.6px; }
  .values .head { width: 8px; }
  .list { height: 798px; }
  .foot { border-top: 2px solid #868690; height: 38px; }
  .row { height: 20px; display: flex; align-items: center; }
  .arrow { width: 21px; padding-left: 6px; box-sizing: border-box; padding-top: 2px; }
  .label { flex: 1; height: 20px; display: flex; align-items: center; padding-left: 3px; margin-right: 1px; color: #fff; }
  .label.selected { background: #3399ff; }
  .label.selected .name { outline: 1px dotted #b8703a; }
  .name { margin-left: 3px; padding-left: 3px; flex: 1; height: 18px; line-height: 17px; font-size: 11.5px; white-space: nowrap; letter-spacing: -0.34px; }
  .value { height: 20px; width: 12px; padding-left: 4px; overflow: hidden; color: #fff; font: 11.5px/20px "Liberation Mono", monospace; letter-spacing: -0.4px; }
  .value.selected { background: #f0f0f0; color: #000; }

  .splitter { background: #ededf2; height: 895px; }
  .waves { background: #000; font-family: "Open Sans", "Noto Sans", sans-serif; letter-spacing: 0; }
  .val { fill: #fff; font-size: 10.5px; text-anchor: middle; }
  .ns { fill: #fff; font-size: 11px; letter-spacing: -0.3px; }
  .vscroll { grid-row: 1 / 3; grid-column: 7; padding-left: 2px; box-shadow: 2px 0 0 #fff inset; }
  .hscroll { grid-row: 2; grid-column: 2 / 7; }

  .tabs { height: 26px; display: flex; }
  .tab { width: 960px; height: 25px; box-sizing: border-box; display: flex; align-items: center; padding: 2px 7px 0 5px; border-left: 1px solid #a0a0a0; border-right: 1px solid #a0a0a0; background: linear-gradient(#e6e6e6, #fcfcfc); border-bottom: 3px solid #2a8ff0; }
  .tab span { flex: 1; text-align: center; font-size: 11.5px; padding-top: 1px; }
  .tabrest { flex: 1; margin-top: 2px; border-top: 1px solid #a0a0a0; }
  .status { height: 28px; display: flex; justify-content: space-between; align-items: center; padding: 0 2px 0 6px; box-sizing: border-box; }
  .hint { letter-spacing: -0.5px; }
  .sim { width: 110px; height: 24px; box-sizing: border-box; line-height: 22px; padding-left: 3px; border: 1px solid; border-color: #a0a0a0 #fff #fff #a0a0a0; white-space: nowrap; }

  .taskbar { height: 40px; background: #101010; display: flex; align-items: center; color: #fff; }
  .start { width: 48px; display: flex; justify-content: center; }
  .search { width: 344px; height: 40px; line-height: 40px; padding-left: 12px; box-sizing: border-box; background: #3f3f3f; color: #a2a2a2; font-size: 15px; letter-spacing: -0.2px; }
  .taskview { width: 49px; display: flex; justify-content: center; }
  .app { width: 40px; height: 40px; margin: 0 4.5px; box-sizing: border-box; display: flex; align-items: center; justify-content: center; border-bottom: 2px solid transparent; padding-top: 2px; }
  .app.open { border-bottom-color: #76b9ed; }
  .app.active { width: 48px; margin: 0 0 0 1px; background: linear-gradient(90deg, #333 0 44px, #111 44px 45px, #262626 45px); }
  .app.active svg { width: 24px; height: 24px; }
  .tray { margin-left: auto; }
  .clock { width: 60px; display: flex; flex-direction: column; align-items: center; gap: 5px; }
  .peek { width: 4px; height: 40px; margin-left: 5px; border-left: 1px solid #666; }
</style>
